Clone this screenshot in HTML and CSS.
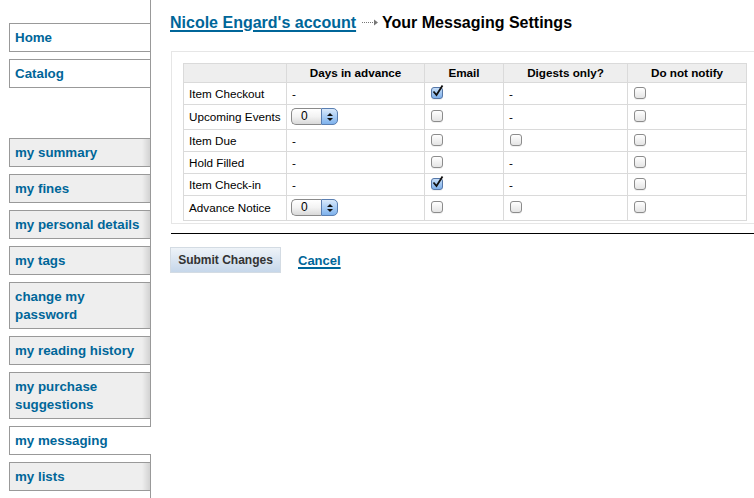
FILE: index.html
```html
<!DOCTYPE html>
<html lang="en">
<head>
<meta charset="utf-8">
<title>Your Messaging Settings</title>
<link rel="stylesheet" href="styles.css">
</head>
<body>
<div class="page">
  <nav class="sidebar">
    <a class="tab" href="#">Home</a>
    <a class="tab tab-last" href="#">Catalog</a>
    <a class="item" href="#">my summary</a>
    <a class="item" href="#">my fines</a>
    <a class="item" href="#">my personal details</a>
    <a class="item" href="#">my tags</a>
    <a class="item" href="#">change my password</a>
    <a class="item" href="#">my reading history</a>
    <a class="item" href="#">my purchase suggestions</a>
    <a class="item active" href="#">my messaging</a>
    <a class="item" href="#">my lists</a>
  </nav>
  <main class="main">
    <h1 class="title"><a href="#">Nicole Engard's account</a><svg class="arrow" width="16" height="7" viewBox="0 0 16 7"><line x1="0" y1="3.5" x2="12" y2="3.5" stroke="#777" stroke-width="1" stroke-dasharray="1 1"/><polygon points="12,0.5 16,3.5 12,6.5" fill="#777"/></svg>Your Messaging Settings</h1>
    <div class="box">
      <table class="grid">
        <colgroup>
          <col class="c1"><col class="c2"><col class="c3"><col class="c4"><col class="c5">
        </colgroup>
        <thead>
          <tr><th></th><th>Days in advance</th><th>Email</th><th>Digests only?</th><th>Do not notify</th></tr>
        </thead>
        <tbody>
          <tr><td>Item Checkout</td><td>-</td><td><span class="cb on"><svg class="tick" width="12" height="12" viewBox="0 0 12 12"><path d="M1.5 6.5 L4.5 10 L10.5 0.5" fill="none" stroke="#111" stroke-width="1.8"/></svg></span></td><td>-</td><td><span class="cb"></span></td></tr>
          <tr class="tall"><td>Upcoming Events</td><td><span class="spin"><span class="spin-val">0</span><span class="spin-btn"><span class="up"></span><span class="down"></span></span></span></td><td><span class="cb"></span></td><td>-</td><td><span class="cb"></span></td></tr>
          <tr><td>Item Due</td><td>-</td><td><span class="cb"></span></td><td><span class="cb"></span></td><td><span class="cb"></span></td></tr>
          <tr><td>Hold Filled</td><td>-</td><td><span class="cb"></span></td><td>-</td><td><span class="cb"></span></td></tr>
          <tr><td>Item Check-in</td><td>-</td><td><span class="cb on"><svg class="tick" width="12" height="12" viewBox="0 0 12 12"><path d="M1.5 6.5 L4.5 10 L10.5 0.5" fill="none" stroke="#111" stroke-width="1.8"/></svg></span></td><td>-</td><td><span class="cb"></span></td></tr>
          <tr class="tall"><td>Advance Notice</td><td><span class="spin"><span class="spin-val">0</span><span class="spin-btn"><span class="up"></span><span class="down"></span></span></span></td><td><span class="cb"></span></td><td><span class="cb"></span></td><td><span class="cb"></span></td></tr>
        </tbody>
      </table>
    </div>
    <div class="rule"></div>
    <div class="actions">
      <button class="submit" type="button">Submit Changes</button>
      <a class="cancel" href="#">Cancel</a>
    </div>
  </main>
</div>
</body>
</html>
```
FILE: styles.css
```css
html, body {
  margin: 0;
  padding: 0;
  background: #fff;
}
body {
  font-family: "Liberation Sans", Arial, Helvetica, sans-serif;
  color: #000;
}
.page {
  display: flex;
  min-height: 100vh;
}
.sidebar {
  width: 150px;
  flex: none;
  border-right: 1px solid #999;
  padding-top: 23px;
  display: flex;
  flex-direction: column;
}
.tab, .item {
  display: block;
  margin-left: 9px;
  margin-bottom: 7px;
  border: 1px solid #999;
  border-right: 0;
  padding: 5px 8px 4px 5px;
  font-size: 13.33px;
  line-height: 18px;
  font-weight: bold;
  color: #006699;
  text-decoration: none;
  background: #fff;
}
.tab-last {
  margin-bottom: 50px;
}
.item {
  background: linear-gradient(to right, #eeeeee calc(100% - 8px), #d2d2d2);
}
.item.active {
  background: #fff;
  margin-right: -1px;
}
.main {
  flex: 1;
  min-width: 0;
  padding-left: 19px;
}
.title {
  margin: 13px 0 0 0;
  font-size: 16px;
  line-height: 20px;
  font-weight: bold;
  white-space: nowrap;
}
.title a {
  color: #006699;
  text-decoration: underline;
  text-decoration-thickness: 2px;
  text-underline-offset: 2px;
}
.arrow {
  margin: 0 4px 0 6px;
  vertical-align: 2px;
}
.box {
  margin: 18px 0 0 1px;
  border: 1px solid #e6e6e6;
  border-right: 0;
  padding: 11px 0 2px 11px;
}
.grid {
  border-collapse: collapse;
  table-layout: fixed;
  width: 563px;
  font-size: 11.7px;
}
.c1 { width: 103px; }
.c2 { width: 138px; }
.c3 { width: 79px; }
.c4 { width: 124px; }
.c5 { width: 119px; }
.grid th, .grid td {
  border: 1px solid #dadada;
}
.grid th {
  background: #eeeeee;
  font-weight: bold;
  text-align: center;
  padding: 2px 5px;
  line-height: 14px;
}
.grid td {
  padding: 3px 5px;
  line-height: 15px;
  text-align: left;
  white-space: nowrap;
}
.grid tr.tall td {
  padding-top: 3px;
  padding-bottom: 4px;
}
.cb {
  display: inline-block;
  position: relative;
  width: 10px;
  height: 10px;
  margin-left: 1px;
  vertical-align: -1px;
  border: 1px solid #8c8c8c;
  border-radius: 3px;
  background: linear-gradient(#ffffff, #e4e4e4);
  box-shadow: 0 1px 0 rgba(0,0,0,0.06);
}
.cb.on {
  border-color: #5677a8;
  background: linear-gradient(#c6def8, #7fb0ea);
}
.tick {
  position: absolute;
  left: 0;
  top: -3px;
}
.spin {
  display: inline-flex;
  vertical-align: top;
  height: 17px;
  margin-left: -1px;
  font-size: 12px;
}
.spin-val {
  width: 30px;
  box-sizing: border-box;
  border: 1px solid #8a8a8a;
  border-right: 0;
  border-radius: 5px 0 0 5px;
  background: linear-gradient(#ffffff, #f3f3f3 50%, #d9d9d9);
  padding-left: 9px;
  line-height: 15px;
}
.spin-btn {
  width: 17px;
  box-sizing: border-box;
  border: 1px solid #5a7eb0;
  border-radius: 0 5px 5px 0;
  background: linear-gradient(#d9e9fb, #a9cdf5 50%, #7fb2ec);
  display: flex;
  flex-direction: column;
  align-items: center;
  justify-content: center;
  gap: 2px;
}
.up {
  width: 0;
  height: 0;
  border-left: 3px solid transparent;
  border-right: 3px solid transparent;
  border-bottom: 3px solid #111;
}
.down {
  width: 0;
  height: 0;
  border-left: 3px solid transparent;
  border-right: 3px solid transparent;
  border-top: 3px solid #111;
}
.rule {
  height: 1px;
  background: #000;
  margin: 9px 0 13px 1px;
}
.actions {
  display: flex;
  align-items: center;
  gap: 17px;
}
.submit {
  width: 111px;
  height: 26px;
  padding: 0;
  border: 1px solid #d3dbe3;
  background: linear-gradient(#eef3f8, #c6d7ea);
  color: #333;
  font-family: "Liberation Sans", Arial, Helvetica, sans-serif;
  font-size: 12px;
  font-weight: bold;
}
.cancel {
  color: #006699;
  font-size: 13px;
  font-weight: bold;
  text-decoration: underline;
  text-decoration-thickness: 2px;
  text-underline-offset: 2px;
}
```
